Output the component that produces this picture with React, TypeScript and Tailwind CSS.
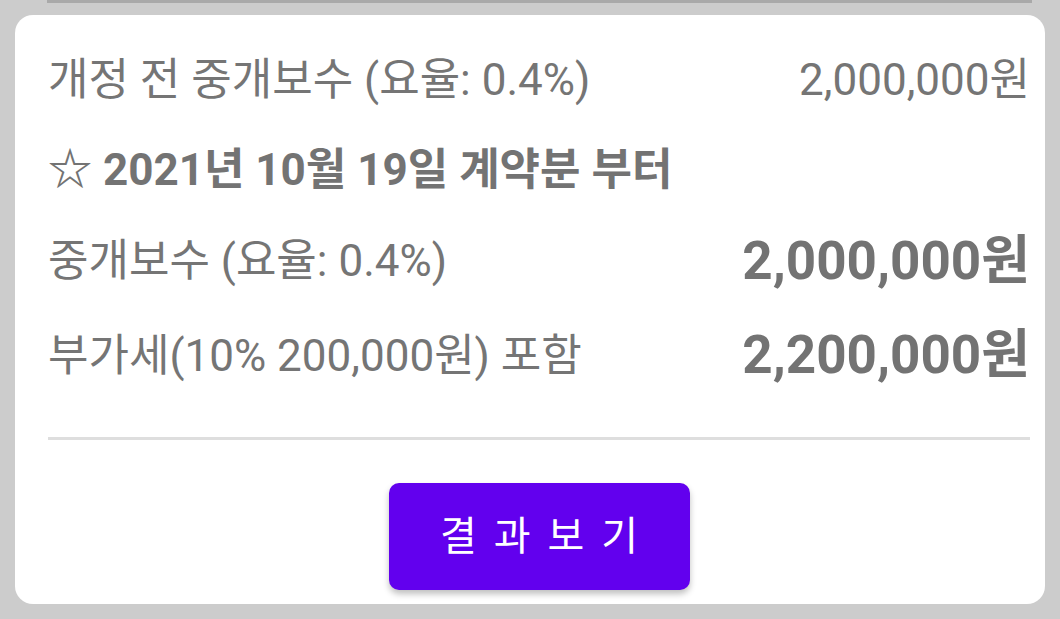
const font = { fontFamily: '"Roboto", "Noto Sans CJK KR", sans-serif' }

function Row({ label, value, big = false, h = 'h-[92px]' }: { label: string; value: string; big?: boolean; h?: string }) {
  return (
    <div className={`flex items-center justify-between ${h}`}>
      <span className="text-[44px] text-[#757575] leading-none">{label}</span>
      <span
        className={
          big
            ? 'text-[53px] font-bold text-[#737373] leading-none'
            : 'text-[44px] text-[#757575] leading-none'
        }
      >
        {value}
      </span>
    </div>
  )
}

export default function App() {
  return (
    <div className="w-[1060px] h-[619px] bg-[#cccccc] overflow-hidden" style={font}>
      <div className="ml-[47px] w-[985px] h-[3px] bg-[#a9a9a9]" />
      <div className="mx-[15px] mt-[12px] h-[589px] rounded-[18px] bg-white pl-[33px] pr-[15px] pt-[19px]">
        <Row label="개정 전 중개보수 (요율: 0.4%)" value="2,000,000원" />
        <div className="flex items-center h-[88px]">
          <span className="text-[44px] font-bold text-[#737373] leading-none">☆ 2021년 10월 19일 계약분 부터</span>
        </div>
        <Row label="중개보수 (요율: 0.4%)" value="2,000,000원" big h="h-[94px]" />
        <Row label="부가세(10% 200,000원) 포함" value="2,200,000원" big h="h-[95px]" />
        <div className="mt-[34px] h-[3px] bg-[#dedede]" />
        <div className="flex justify-center pt-[43px]">
          <button className="w-[301px] h-[107px] rounded-[10px] bg-[#6200ee] text-white text-[40px] leading-none tracking-[17px] pl-[17px] shadow-[0_4px_6px_rgba(0,0,0,0.25)]">
            결과보기
          </button>
        </div>
      </div>
    </div>
  )
}
